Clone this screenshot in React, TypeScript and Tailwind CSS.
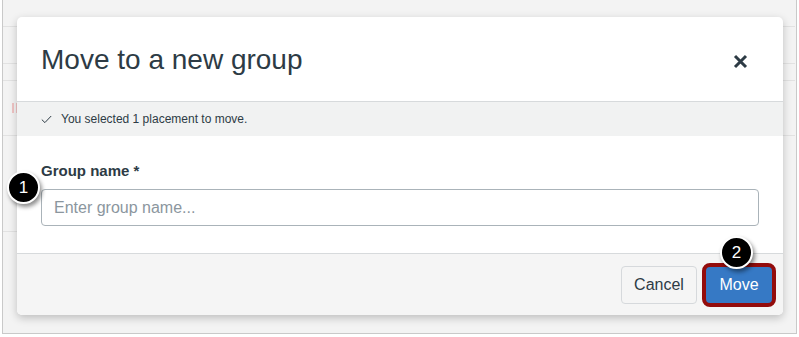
import React from "react";

function Badge({ n }: { n: string }) {
  return (
    <div className="flex h-[33px] w-[33px] items-center justify-center rounded-full border-2 border-white bg-black text-[17px] text-white shadow-[2px_3px_4px_rgba(0,0,0,0.45)] [font-family:'Liberation_Sans',Arial,sans-serif]">
      {n}
    </div>
  );
}

function Gutter({ marks }: { marks: boolean }) {
  return (
    <div className="flex h-full flex-col">
      <div className="h-[27px] shrink-0 border-b border-[#e2e2e2]" />
      <div className="h-[37px] shrink-0 border-b border-[#e2e2e2]" />
      <div className="h-[17px] shrink-0 border-b border-[#e2e2e2]" />
      <div className="flex h-[55px] shrink-0 items-center gap-[2px] border-b border-[#e2e2e2] pl-[9px]">
        {marks && (
          <>
            <div className="h-[10px] w-[2px] bg-[#f0c4c4]" />
            <div className="h-[10px] w-[2px] bg-[#f0c4c4]" />
          </>
        )}
      </div>
      {marks && <div className="h-[96px] shrink-0 border-b border-[#e2e2e2]" />}
    </div>
  );
}

export default function App() {
  return (
    <div className="h-[337px] w-[799px] overflow-hidden bg-white [font-family:'Liberation_Sans',Arial,sans-serif] text-[#2d3b45]">
      <div className="ml-[2px] flex h-[334px] w-[795px] border border-t-0 border-[#c9c9c9] bg-[#f3f3f3]">
        <div className="w-[14px] shrink-0">
          <Gutter marks={true} />
        </div>
        <div className="pt-[17px]">
          <div className="relative flex h-[298px] w-[766px] flex-col rounded-[5px] bg-white shadow-[0_3px_8px_rgba(0,0,0,0.22)]">
            {/* header */}
            <div className="flex h-[85px] shrink-0 items-center justify-between border-b border-[#d7dadc] pl-[24px] pr-[35px]">
              <h1 className="pt-[2px] text-[28px] font-normal leading-none text-[#2d3b45]">
                Move to a new group
              </h1>
              <svg width="15" height="15" viewBox="0 0 15 15" className="mt-[4px]">
                <path d="M2 2 L13 13 M13 2 L2 13" stroke="#2d3b45" strokeWidth="3" />
              </svg>
            </div>
            {/* alert */}
            <div className="flex h-[34px] shrink-0 items-center gap-[9px] bg-[#f1f2f2] pl-[24px]">
              <svg width="11" height="9" viewBox="0 0 11 9">
                <path d="M0.8 4.6 L3.9 7.6 L10.2 1" fill="none" stroke="#2d3b45" strokeWidth="1" />
              </svg>
              <span className="text-[12px] text-[#2d3b45]">You selected 1 placement to move.</span>
            </div>
            {/* body */}
            <div className="flex h-[117px] shrink-0 flex-col px-[24px] pt-[26px]">
              <label className="text-[15px] font-bold leading-[18px] text-[#2d3b45]">Group name *</label>
              <div className="mt-[9px] flex h-[37px] w-[718px] items-center rounded-[4px] border border-[#aab3b9] px-[12px] text-[16px] text-[#8b969e]">
                Enter group name...
              </div>
            </div>
            {/* footer */}
            <div className="flex flex-1 items-center justify-end gap-[8px] rounded-b-[5px] border-t border-[#d7dadc] bg-[#f5f5f5] pr-[10px]">
              <div className="flex h-[38px] w-[76px] items-center justify-center rounded-[4px] border border-[#d6d9dc] bg-[#f5f5f5] text-[16px] text-[#2d3b45]">
                Cancel
              </div>
              <div className="flex h-[38px] w-[68px] items-center justify-center rounded-[5px] bg-[#3679c5] text-[16px] text-white outline-[4px] outline-offset-[-1px] outline-[#930c0c] outline-solid">
                Move
              </div>
            </div>

            {/* annotation badges */}
            <div className="absolute left-[-10px] top-[154px]">
              <Badge n="1" />
            </div>
            <div className="absolute left-[703px] top-[219px]">
              <Badge n="2" />
            </div>
          </div>
        </div>
        <div className="w-[12px] shrink-0">
          <Gutter marks={false} />
        </div>
      </div>
    </div>
  );
}
